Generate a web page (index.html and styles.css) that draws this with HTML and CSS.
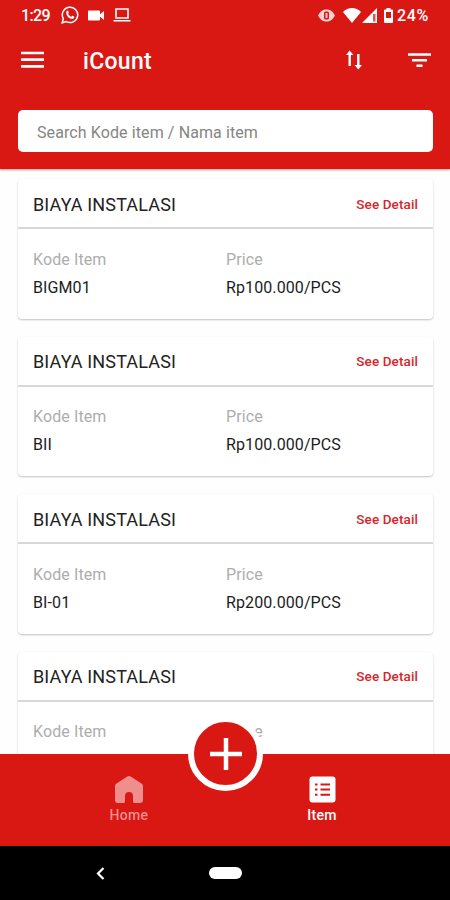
FILE: index.html
```html
<!DOCTYPE html>
<html lang="id">
<head>
    <meta charset="UTF-8">
    <meta name="viewport" content="width=device-width, initial-scale=1.0">
    <title>iCount</title>
    <link rel="stylesheet" href="styles.css">
</head>
<body>
    <header class="header">
        <div class="status">
            <span class="time">1:29</span>
            <svg class="whatsapp" width="18" height="18" viewBox="0 0 18 18">
                <path d="M1.2 16.8l1.1-4.2A7.7 7.7 0 1 1 5.3 15.6z" fill="none" stroke="#fff" stroke-width="1.5"/>
                <path d="M5.5 5.2c.6-1 1.4-.9 1.7-.2l.6 1.4c.1.5-.6 1-.7 1.3.7 1.4 1.8 2.5 3.2 3 .5-.2.8-1 1.3-.9l1.5.8c.6.5-.2 2-1.5 2.3-3.3.4-7.4-4-6.1-7.7z" fill="#fff"/>
            </svg>
            <svg class="video" width="17" height="11" viewBox="0 0 17 11">
                <path d="M1 .5h10a1 1 0 0 1 1 1v2.7L16 1v9l-4-3.2v2.7a1 1 0 0 1-1 1H1a1 1 0 0 1-1-1v-8a1 1 0 0 1 1-1z" fill="#fff"/>
            </svg>
            <svg class="laptop" width="18" height="14" viewBox="0 0 18 14">
                <path d="M3 1h12v9H3zM.5 12.8h17" fill="none" stroke="#fff" stroke-width="1.6"/>
            </svg>
            <svg class="eye" width="17" height="13" viewBox="0 0 17 13">
                <path d="M0 6.5C2.5 2 5 .5 8.5 .5S14.5 2 17 6.5C14.5 11 12 12.5 8.5 12.5S2.5 11 0 6.5z" fill="#fff" opacity=".8"/>
                <rect x="6" y="2.5" width="5" height="8" rx="1.5" fill="#d91813"/>
                <rect x="7.5" y="4" width="2" height="5" fill="#fff" opacity=".75"/>
            </svg>
            <svg class="wifi" width="18" height="15" viewBox="0 0 18 15">
                <path d="M0 4C5-1.2 13-1.2 18 4L9 15z" fill="#fff"/>
            </svg>
            <svg class="signal" width="15" height="15" viewBox="0 0 15 15">
                <path d="M0 15L15 0v15z" fill="#fff"/>
                <path d="M11 6h2.5v7.5H11z" fill="#d91813" opacity=".75"/>
            </svg>
            <svg class="battery" width="9" height="15" viewBox="0 0 9 15">
                <path d="M2.5 0h4v1.5H8a1 1 0 0 1 1 1V14a1 1 0 0 1-1 1H1a1 1 0 0 1-1-1V2.5a1 1 0 0 1 1-1h1.5z" fill="#fff"/>
                <path d="M2 4h5v6H2z" fill="#d91813"/>
            </svg>
            <span class="percent">24%</span>
        </div>
        <div class="toolbar">
            <svg class="menu" width="23" height="18" viewBox="0 0 23 18">
                <path d="M0 2h23M0 8.7h23M0 15.3h23" stroke="#fff" stroke-width="2.7"/>
            </svg>
            <h1>iCount</h1>
            <svg class="sort" width="18" height="20" viewBox="0 0 18 20">
                <path d="M4.7 16V4M13.3 4v12" stroke="#fff" stroke-width="2.4"/>
                <path d="M1 5L4.7 .5 8.4 5zM9.6 15l3.7 4.5 3.7-4.5z" fill="#fff"/>
            </svg>
            <svg class="filter" width="23" height="16" viewBox="0 0 23 16">
                <path d="M0 2.5h23M4 8.3h15M8.5 13.8h6" stroke="#fff" stroke-width="2.6"/>
            </svg>
        </div>
        <input class="search" type="text" placeholder="Search Kode item / Nama item">
    </header>

    <main class="list">
        <div class="card">
            <div class="card-head">
                <h2>BIAYA INSTALASI</h2>
                <a class="detail">See Detail</a>
            </div>
            <div class="card-body">
                <div><p class="label">Kode Item</p><p class="value">BIGM01</p></div>
                <div><p class="label">Price</p><p class="value">Rp100.000/PCS</p></div>
            </div>
        </div>
        <div class="card">
            <div class="card-head">
                <h2>BIAYA INSTALASI</h2>
                <a class="detail">See Detail</a>
            </div>
            <div class="card-body">
                <div><p class="label">Kode Item</p><p class="value">BII</p></div>
                <div><p class="label">Price</p><p class="value">Rp100.000/PCS</p></div>
            </div>
        </div>
        <div class="card">
            <div class="card-head">
                <h2>BIAYA INSTALASI</h2>
                <a class="detail">See Detail</a>
            </div>
            <div class="card-body">
                <div><p class="label">Kode Item</p><p class="value">BI-01</p></div>
                <div><p class="label">Price</p><p class="value">Rp200.000/PCS</p></div>
            </div>
        </div>
        <div class="card">
            <div class="card-head">
                <h2>BIAYA INSTALASI</h2>
                <a class="detail">See Detail</a>
            </div>
            <div class="card-body">
                <div><p class="label">Kode Item</p></div>
                <div><p class="label">Price</p></div>
            </div>
        </div>
    </main>

    <nav class="tabs">
        <a class="tab home">
            <svg width="28" height="27" viewBox="0 0 28 27">
                <path d="M12.3 .6a3 3 0 0 1 3.4 0L26.5 7.5A3 3 0 0 1 28 10v14a3 3 0 0 1-3 3h-5.5a1.5 1.5 0 0 1-1.5-1.5V20a4 4 0 0 0-8 0v5.5A1.5 1.5 0 0 1 8.5 27H3a3 3 0 0 1-3-3V10a3 3 0 0 1 1.5-2.5z" fill="currentColor"/>
            </svg>
            <span>Home</span>
        </a>
        <a class="tab item">
            <svg width="27" height="27" viewBox="0 0 27 27">
                <rect x=".5" y=".5" width="26" height="26" rx="3" fill="currentColor"/>
                <path d="M6 8.5h2.5M11.500 8.5h9.5M6 13.5h2.5M11.500 13.5h9.5M6 18.700h2.5M11.500 18.700h9.5" stroke="#d91813" stroke-width="2"/>
            </svg>
            <span>Item</span>
        </a>
        <button class="add" type="button" aria-label="Add">
            <svg width="32" height="32" viewBox="0 0 32 32">
                <path d="M16 0v32M0 16h32" stroke="#fff" stroke-width="4.5"/>
            </svg>
        </button>
    </nav>

    <footer class="system">
        <svg class="back" width="9" height="13" viewBox="0 0 9 13">
            <path d="M7.5 1L2 6.5 7.5 12" fill="none" stroke="#fff" stroke-width="2.2"/>
        </svg>
        <span class="pill"></span>
    </footer>
</body>
</html>
```
FILE: styles.css
```css
* {
    box-sizing: border-box;
}
body {
    margin: 0;
    height: 900px;
    overflow: hidden;
    display: flex;
    flex-direction: column;
    background: #fefefe;
    font-family: Roboto, "Liberation Sans", sans-serif;
}
h1, h2, p {
    margin: 0;
}
svg {
    display: block;
    flex: none;
}
.header {
    flex: none;
    height: 169px;
    background: #d91813;
    color: #fff;
    box-shadow: 0 1px 2px rgba(217, 24, 19, 0.45);
}
.status {
    display: flex;
    align-items: center;
    height: 30px;
    padding: 0 20px 0 21px;
    font-size: 16px;
    font-weight: 500;
}
.time {
    width: 40px;
    letter-spacing: -0.6px;
}
.video {
    margin-left: 9px;
}
.laptop {
    margin-left: 8px;
}
.eye {
    margin-left: auto;
}
.wifi {
    margin-left: 8px;
}
.signal {
    margin-left: 1px;
}
.battery {
    margin-left: 7px;
}
.percent {
    width: 33px;
    margin-left: 4px;
    letter-spacing: 0.7px;
}
.toolbar {
    display: flex;
    align-items: center;
    height: 60px;
    padding: 0 19px 0 21px;
}
.toolbar h1 {
    flex: 1;
    margin-left: 39px;
    padding-top: 3px;
    font-size: 23px;
    font-weight: 500;
    letter-spacing: 0.3px;
}
.filter {
    margin-left: 45px;
}
.search {
    display: block;
    width: 415px;
    height: 42px;
    margin: 20px 0 0 18px;
    padding: 2px 19px 0;
    border: 0;
    border-radius: 5px;
    background: #fff;
    font-family: inherit;
    font-size: 16px;
    letter-spacing: 0.1px;
}
.search::placeholder {
    color: #858585;
}
.list {
    flex: none;
    height: 585px;
    padding: 10px 17px 0 18px;
    overflow: hidden;
}
.card {
    height: 139.5px;
    margin-bottom: 18px;
    border-radius: 4px;
    background: #fff;
    box-shadow: 0 1px 2px rgba(0, 0, 0, 0.24);
}
.card-head {
    display: flex;
    align-items: center;
    justify-content: space-between;
    height: 50px;
    padding: 2px 15px 0 15px;
    border-bottom: 2px solid #d8d8d8;
}
.card-head h2 {
    font-size: 18px;
    font-weight: 400;
    letter-spacing: 0.15px;
    color: #222;
}
.detail {
    padding-bottom: 1px;
    font-size: 13.5px;
    font-weight: 500;
    letter-spacing: 0.1px;
    color: #d6262c;
}
.card-body {
    display: grid;
    grid-template-columns: 193px 1fr;
    padding: 20.5px 15px 0;
    line-height: 20px;
}
.label {
    font-size: 16px;
    letter-spacing: 0.1px;
    color: #adadad;
}
.value {
    margin-top: 8px;
    font-size: 16px;
    letter-spacing: 0.1px;
    color: #1c1c1c;
}
.tabs {
    position: relative;
    flex: none;
    display: grid;
    grid-template-columns: 129px 129px;
    justify-content: center;
    column-gap: 64px;
    height: 92px;
    padding: 22px 0 0 1px;
    background: #d91813;
}
.tab {
    display: flex;
    flex-direction: column;
    align-items: center;
    gap: 4px;
    font-size: 14px;
    font-weight: 500;
    line-height: 17px;
    letter-spacing: 0.3px;
    color: #fff;
}
.home {
    color: #f08e8d;
}
/* floating button over the top edge of the bar */
.add {
    position: absolute;
    left: 188px;
    top: -38px;
    display: flex;
    align-items: center;
    justify-content: center;
    width: 75px;
    height: 75px;
    padding: 0;
    border: 6px solid #fff;
    border-radius: 50%;
    background: #d91813;
}
.system {
    flex: 1;
    display: grid;
    grid-template-columns: 113px 33px;
    align-items: center;
    padding-left: 96px;
    background: #000;
}
.pill {
    width: 33px;
    height: 12px;
    border-radius: 6px;
    background: #fff;
}
```
